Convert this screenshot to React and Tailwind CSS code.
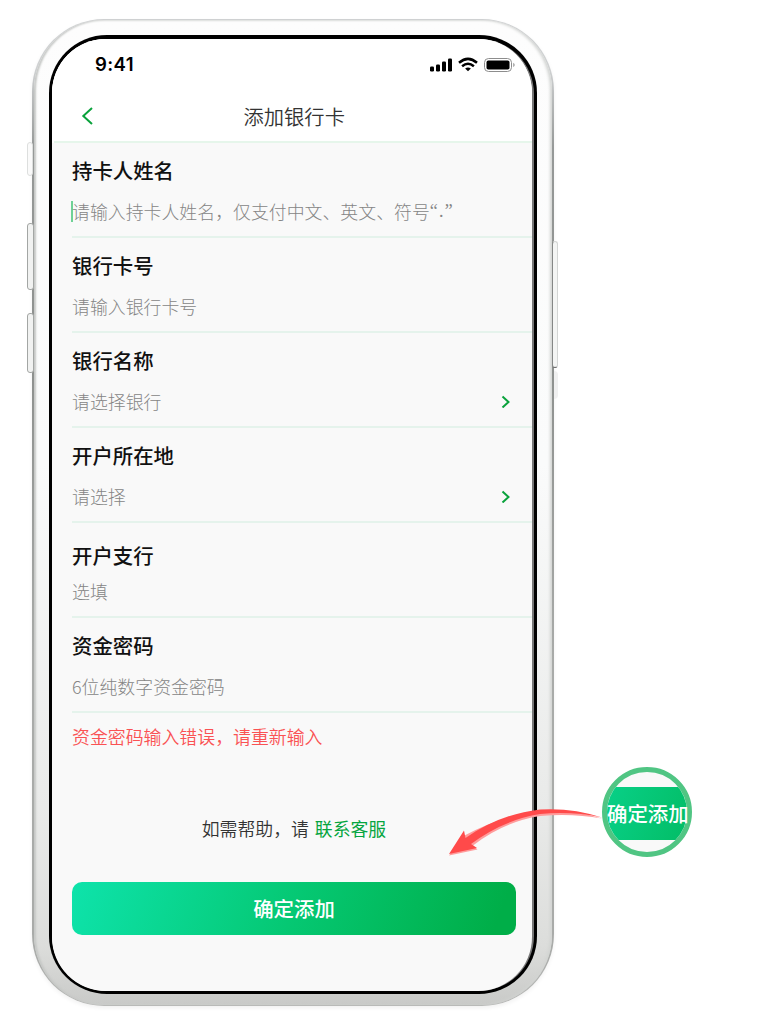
import React from "react";

const fields = [
  { label: "持卡人姓名", hint: "请输入持卡人姓名，仅支付中文、英文、符号", quoted: true, caret: true },
  { label: "银行卡号", hint: "请输入银行卡号" },
  { label: "银行名称", hint: "请选择银行", arrow: true },
  { label: "开户所在地", hint: "请选择", arrow: true },
  { label: "开户支行", hint: "选填", offset: "pt-[17px]" },
  { label: "资金密码", hint: "6位纯数字资金密码", offset: "pt-[12px]" },
];

function StatusBar() {
  return (
    <div className="flex h-[52px] shrink-0 items-center justify-between pl-[43px] pr-[17px]">
      <span className="-mt-[2px] font-['Inter','Liberation_Sans',sans-serif] text-[18.6px] font-semibold leading-6 tracking-[0.4px] text-black">9:41</span>
      <svg width="86" height="16" viewBox="0 0 86 16" className="-mt-px">
        <g fill="#000">
          <rect x="1" y="9.5" width="4" height="5" rx="1.2" />
          <rect x="7" y="7.5" width="4" height="7" rx="1.2" />
          <rect x="13" y="4.5" width="4" height="10" rx="1.2" />
          <rect x="19" y="1.5" width="4" height="13" rx="1.2" />
          <path d="M39 14.3 L36.1 11.6 Q39 9.2 41.9 11.6 Z" />
        </g>
        <g fill="none" stroke="#000" strokeWidth="2.5">
          <path d="M30 5.8 Q39 -2 48 5.8" />
          <path d="M33.1 9.2 Q39 4.2 44.9 9.2" />
        </g>
        <rect x="55.5" y="1.5" width="27" height="13" rx="4" fill="none" stroke="#8d8d8d" />
        <rect x="57.5" y="3.6" width="23" height="9" rx="1.8" fill="#000" />
        <path d="M84.3 5.8 Q87 8 84.3 10.2 Z" fill="#8d8d8d" />
      </svg>
    </div>
  );
}

function Header() {
  return (
    <div className="ml-[2px] flex h-[52px] shrink-0 items-center border-b-2 border-[#e6f6eb]">
      <svg width="12" height="18" viewBox="0 0 12 18" className="ml-[27px] shrink-0" fill="none" stroke="#0aa23c" strokeWidth="2">
        <path d="M11 1 L2.3 9 L11 17" />
      </svg>
      <h1 className="ml-[150.5px] text-[20.3px] font-[350] leading-[30px] text-[#333]">添加银行卡</h1>
    </div>
  );
}

function Field({ label, hint, quoted, caret, arrow, offset = "pt-[12px]" }) {
  return (
    <div className={`flex h-[95px] shrink-0 flex-col justify-between border-b-2 border-[#e5f3ec] pb-[13px] ${offset}`}>
      <div className="h-[30px] text-[20.4px] font-medium leading-[30px] text-[#111]">{label}</div>
      <div className="flex h-[24px] items-center justify-between pr-[21px]">
        <span className="flex items-center whitespace-nowrap text-[17.9px] font-light leading-6 text-[#858585]">
          {caret && <i className="-ml-[1px] mr-[-1px] h-[21px] w-[2px] bg-[#6fd196]" />}
          {hint}
          {quoted && <span className="font-['Liberation_Serif',serif] tracking-[1.2px]">“.”</span>}
        </span>
        {arrow && (
          <svg width="10" height="14" viewBox="0 0 10 14" fill="none" stroke="#0aa23c" strokeWidth="2">
            <path d="M1.5 2.5 L7.5 8 L1.5 13.5" />
          </svg>
        )}
      </div>
    </div>
  );
}

function Screen() {
  return (
    <div className="flex h-[952px] flex-col overflow-hidden rounded-[54px] bg-[#f9f9f9]">
      <div className="flex shrink-0 flex-col bg-white">
        <StatusBar />
        <Header />
      </div>
      <div className="ml-[2px] flex flex-col pl-[18px]">
        {fields.map((f) => (
          <Field key={f.label} {...f} />
        ))}
        <p className="mt-[11px] text-[17.9px] font-[350] leading-6 text-[#fa5253]">资金密码输入错误，请重新输入</p>
        <p className="mr-[16px] mt-[68px] flex justify-center gap-[6px] text-[17.85px] font-[350] leading-6 text-[#333]">
          <span>如需帮助，请</span>
          <a className="font-normal text-[#06a540]">联系客服</a>
        </p>
        <button className="mt-[42px] flex h-[53px] w-[444px] items-center justify-center rounded-[10px] bg-[linear-gradient(110deg,#0ee3ab_0%,#05c873_50%,#00ae48_95%)] text-[20.4px] font-medium text-white">
          确定添加
        </button>
      </div>
    </div>
  );
}

function Phone() {
  return (
    <div className="relative h-[987px] w-[522px] rounded-[72px] bg-[linear-gradient(180deg,#cfd1d2_0%,#cfd1d2_5%,#969998_13%,#8d908e_35%,#a9aba9_65%,#a9aba9_94%,#b9bab8_100%)] shadow-[0_2px_4px_rgba(0,0,0,0.06)]">
      <i className="absolute left-[-5px] top-[123px] h-[34px] w-[6px] rounded-[3px] border border-[#dddfde] bg-[#fafafa]" />
      <i className="absolute left-[-5px] top-[204px] h-[67px] w-[7px] rounded-[3px] border border-[#a3a6a4] bg-[#f1f2f1]" />
      <i className="absolute left-[-5px] top-[294px] h-[60px] w-[7px] rounded-[3px] border border-[#a3a6a4] bg-[#f1f2f1]" />
      <div className="h-full rounded-[72px] px-[2px] py-px">
        <div className="h-full rounded-[70px] bg-[linear-gradient(180deg,#fdfdfd_0%,#fafbfb_45%,#e9eae9_80%,#dcdddb_94%,#c9cac8_100%)] px-[15px] pt-[15px] shadow-[inset_2px_0_2px_#c6c8c6,inset_-2px_0_3px_#d2d4d2]">
          <div className="h-[959px] w-[488px] rounded-[58px] bg-black pb-[3px] pl-[3px] pr-[3px] pt-[4px]">
            <div className="rounded-[55px] bg-[linear-gradient(90deg,#f9f9f9_0%,#f9f9f9_50%,#777_99%)] pr-[2px]">
              <Screen />
            </div>
          </div>
        </div>
      </div>
      <i className="absolute right-[-4px] top-[222px] h-[127px] w-[6px] rounded-[3px] border border-[#d3d5d4] border-b-[#666] border-l-[#858786] bg-[#f4f5f4]" />
      <i className="absolute right-[-4px] top-[352px] h-[28px] w-[4px] rounded-r-full bg-[#f0f0f0]" />
    </div>
  );
}

export default function App() {
  return (
    <div className="relative flex h-[1036px] w-[780px] overflow-hidden bg-white pl-[32px] pt-[19px] font-['Noto_Sans_CJK_SC',sans-serif]">
      <Phone />
      <svg width="160" height="54" viewBox="446 804 160 54" className="absolute left-[446px] top-[804px]">
        <path d="M449 855.5 L463.5 836 Q500 816 540 811.5 Q572 809 602 818.5 Q572 813 540 816 Q503 822 473 845.5 L477.5 849.5 Z" fill="#ff9d9d" />
        <path d="M449 854 L464 830.5 L465.5 838 Q500 814 540 809.5 Q572 807.5 602 817.5 Q572 811 540 814 Q503 820 471 844 L477 848 Z" fill="#ff4a4a" />
      </svg>
      <div className="absolute left-[602px] top-[767px] flex h-[90px] w-[90px] items-center justify-center overflow-hidden rounded-full border-[5px] border-[#50c583] bg-[#f9f9f9]">
        <div className="mt-[2px] flex h-[53px] w-[80px] shrink-0 items-center justify-center bg-[linear-gradient(110deg,#08d087,#03bd66)]" />
      </div>
      <span className="absolute left-[607px] top-[797.5px] text-[20.4px] font-medium leading-[30px] text-white">确定添加</span>
    </div>
  );
}
